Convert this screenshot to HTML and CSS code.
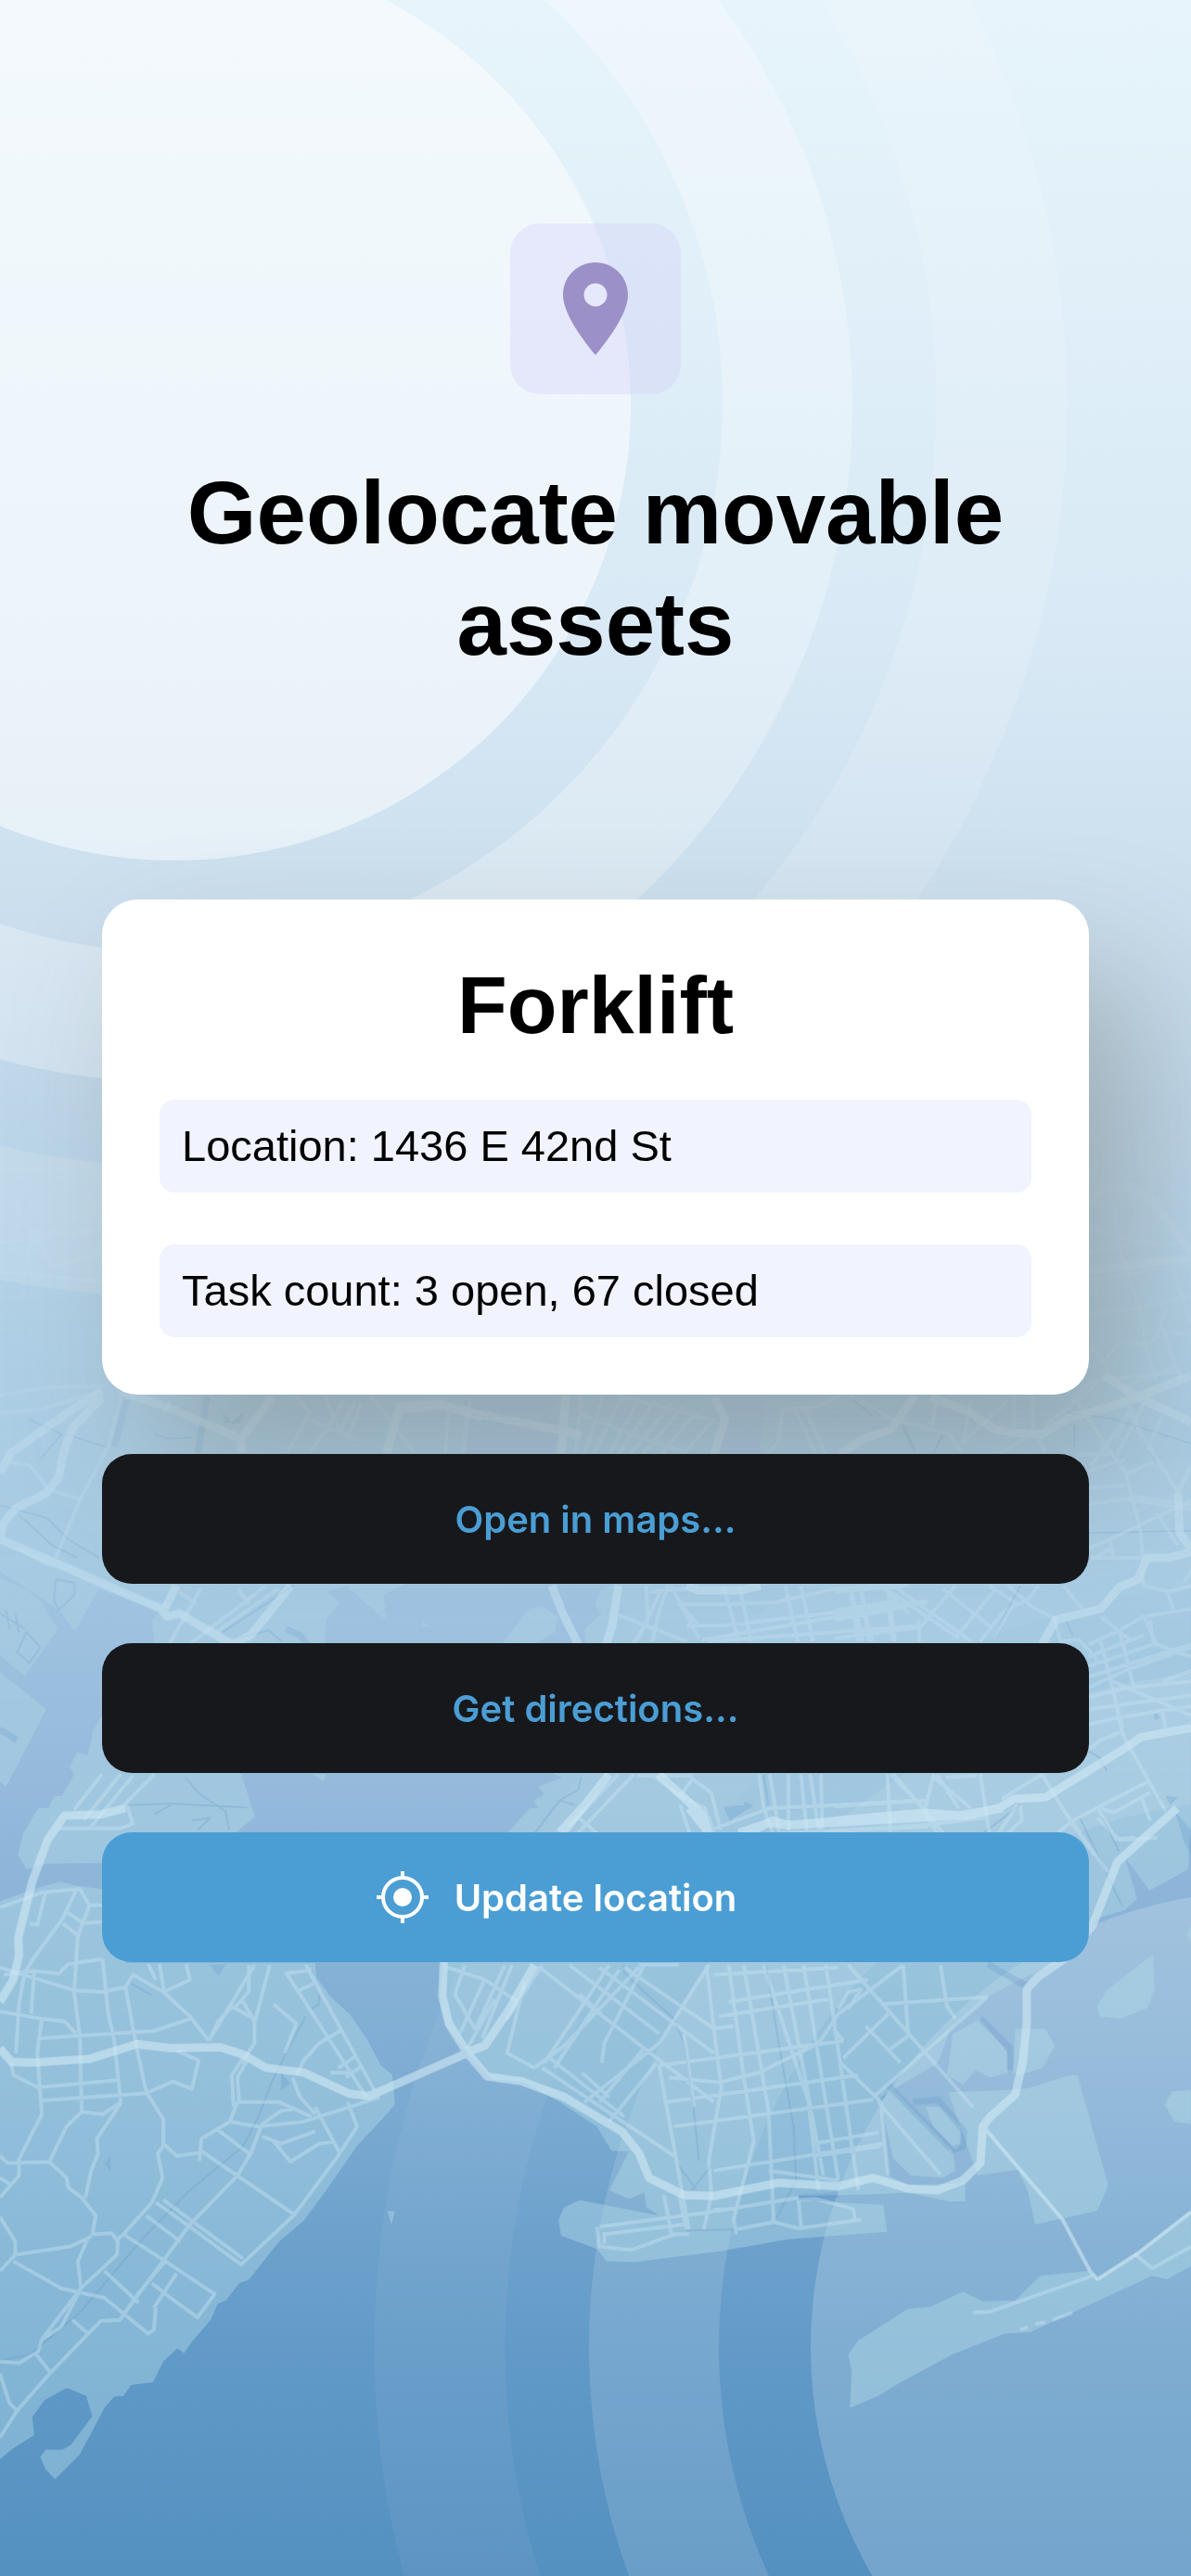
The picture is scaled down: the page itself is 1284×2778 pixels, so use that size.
FILE: index.html
```
<!DOCTYPE html>
<html lang="en">

<head>
    <meta charset="UTF-8">
    <meta name="viewport" content="width=device-width, initial-scale=1">
    <title>Geolocate movable assets</title>
    <link rel="stylesheet" href="styles.css">
</head>

<body>
    <svg class="backdrop" viewBox="0 0 1284 2778" preserveAspectRatio="xMidYMid slice" aria-hidden="true">
        <defs>
            <linearGradient id="sky" x1="0" y1="0" x2="0" y2="1">
                <stop offset="0" stop-color="#e7f4fb" />
                <stop offset="0.25" stop-color="#d8e9f5" />
                <stop offset="0.36" stop-color="#cadeed" />
                <stop offset="0.5" stop-color="#b3d0e7" />
                <stop offset="0.6" stop-color="#a2c5e1" />
                <stop offset="0.7" stop-color="#93b9db" />
                <stop offset="0.8" stop-color="#7fadd3" />
                <stop offset="0.92" stop-color="#6099c7" />
                <stop offset="1" stop-color="#5490c0" />
            </linearGradient>
            <linearGradient id="fade" x1="0" y1="0" x2="0" y2="1">
                <stop offset="0.42" stop-color="#000" />
                <stop offset="0.56" stop-color="#888" />
                <stop offset="0.7" stop-color="#fff" />
            </linearGradient>
            <mask id="mapFade" maskUnits="userSpaceOnUse" x="0" y="0" width="1284" height="2778">
                <rect width="1284" height="2778" fill="url(#fade)" />
            </mask>
        </defs>

        <rect width="1284" height="2778" fill="url(#sky)" />

        <!-- signal rings -->
        <g fill="none" stroke="#fff">
            <circle cx="188" cy="436" r="492" fill="#fff" fill-opacity="0.5" stroke="none" />
            <circle cx="188" cy="436" r="661" stroke-width="140" stroke-opacity="0.28" />
            <circle cx="188" cy="436" r="892" stroke-width="141" stroke-opacity="0.14" />
            <circle cx="1366" cy="2531" r="492" fill="#fff" fill-opacity="0.19" stroke="none" />
            <circle cx="1366" cy="2531" r="661" stroke-width="140" stroke-opacity="0.13" />
            <circle cx="1366" cy="2531" r="892" stroke-width="141" stroke-opacity="0.05" />
        </g>

        <g mask="url(#mapFade)">
            <g class="land">
                <g transform="translate(0 1950) scale(0.40944 0.52806)">
                    <path d="M0 190 110 160 160 150 200 158 270 165 330 316 830 316 833 345 870 385 920 420 965 470 1003 525 1033 545 1040 605 1000 640 940 690 850 790 800 842 735 885 655 963 630 970 595 1005 572 1013 555 1045 505 1090 485 1113 467 1103 430 1130 403 1172 345 1178 325 1200 300 1202 275 1225 210 1320 145 1370 120 1350 106 1325 120 1310 165 1310 187 1300 243 1242 227 1200 176 1184 118 1208 85 1243 90 1280 30 1310 0 1330Z" />
                    <path d="M62 50 47 95 70 125 125 113 270 112 300 0H100ZM1020 822 1040 824 1030 850Z" />
                </g>
                <g transform="translate(442 1950) scale(0.53699 0.52806)">
                    <path d="M65 250V316L60 390 72 445 115 500 165 555 225 558 300 600 375 650 405 700 440 700 400 780 440 798 470 785 475 815 500 832 340 800 310 815 298 840 303 873 375 900 395 925 450 927 620 905 760 880 958 865 950 810 780 800V792L940 788 1000 785 1080 803 1115 803 1115 765 1000 770 960 750 945 590 1060 520 1085 450 1160 385 1235 345 1300 316 1380 225 1435 208 1460 185 1435 100 1485 168 1562 125 1568 0H240L65 200Z" />
                    <path d="M1078 545 1110 565 1135 535 1165 550 1200 540 1200 500 1145 430 1090 460ZM1210 540 1215 450 1275 450 1295 485 1270 530 1225 545ZM945 600 965 570 1090 700 1095 740 1070 755 1005 750 970 715 960 670ZM1035 610 1065 610 1105 650 1107 685 1095 698 1050 650ZM1080 580 1200 575 1240 572 1320 547 1340 545 1402 770 1380 822 1255 850 1240 780 1220 738 1140 750Z" />
                    <path d="M1380 405 1400 370 1492 298 1495 370 1480 408 1425 430 1385 425ZM1568 575 1530 578 1515 605 1535 640 1568 645ZM1568 240 1560 255 1568 275ZM883 1225 887 1150 880 1115 900 1087 1000 1022 1045 1018 1110 987 1150 1007 1215 1005 1265 955 1360 945 1380 960 1470 900 1568 820V935L1520 962 1490 955 1245 1070 1195 1073 1090 1115 980 1175 940 1200Z" />
                </g>
                <g transform="translate(0 1480) scale(0.33333)">
                    <path d="M0-900H1500V250L1300 690 1240 720 1250 800 1215 775 1120 690 1060 710 1100 745 1055 800 1050 878H500L490 800 520 775 320 700 243 837 195 775 120 720 0 645Z" />
                    <path d="M0 665 90 705 130 740 187 830 80 983 0 915ZM0 970 150 1090 20 1340 0 1325ZM1360 800 1395 825 1370 822Z" />
                    <path d="M62 1560 90 1490 150 1420 175 1370 200 1370 240 1300 225 1275 250 1230 285 1238 300 1160 325 1115 780 1300 825 1437 760 1491 600 1560ZM1010 1300H1055L1048 1322Z" />
                </g>
                <g transform="translate(480 1480) scale(0.33333)">
                    <path d="M370 60 340 130 370 160 350 267H860L912 150 875 60ZM1040 60 1015 267H540V687L500 705 485 750 505 780 450 830 455 878 350 1300 380 1310 300 1340 320 1365 285 1385 300 1410 250 1440 210 1500H2412V-900H1040Z" />
                    <path d="M185 878 270 765 310 755 365 790 355 840 290 878Z" />
                </g>
            </g>

            <g class="creek">
                <g transform="translate(0 1950) scale(0.40944 0.52806)">
                    <path d="M0 1128 80 1115 210 1030 380 875 500 780 640 690 680 630 715 560 760 490 805 425M345 358 400 382M820 410 840 400 840 380" />
                    <path class="pond" d="M275 725 290 712 292 742ZM553 320 575 343 595 318ZM740 540 765 562 740 575Z" />
                </g>
                <g transform="translate(442 1950) scale(0.53699 0.52806)">
                    <path d="M430 320V335L470 375 530 430 550 480 570 620 580 720M715 320 740 480 770 650 775 760 735 838M540 730 575 780M605 730 565 780M555 862 650 860M1345 20 1430 200" />
                    <path class="inlet" d="M1145 430 1205 490 1205 535M1010 600 1060 595 1112 660 1110 690 1085 700M960 565 1085 695M1160 318 1235 362M780 795 860 790" />
                </g>
                <g transform="translate(0 1480) scale(0.33333)">
                    <path d="M90 150 200 200 130 280M210 200 340 240M0 430 150 470 220 540 320 600M60 460 170 560 250 600M0 780 80 830M20 770 30 830M50 780 60 840M85 840 130 890 95 940 55 905ZM600 1310 640 1360 730 1420 740 1480M410 1400 550 1395 800 1408M550 1400 500 1430M620 1450 680 1440 640 1480M720 840 950 690M760 860 870 835 910 870M500 200 550 215 620 210M180 670 240 680 240 720 190 770 175 740Z" />
                    <path class="inlet" d="M410 90 370 240M670 80 640 260M0 1155 55 1190M925 830 970 850 1000 890" />
                    <path class="pond" d="M720 130 750 160 790 125 780 165H725Z" />
                </g>
                <g transform="translate(480 1480) scale(0.33333)">
                    <path d="M440 1310 430 1350 370 1385 290 1490M370 1385 420 1400M1030 1300 1045 1400M1320 80 1410 140M1480 170 1520 250" />
                    <path class="pond" d="M900 1405 965 1400 970 1388 997 1402 920 1450Z" />
                </g>
                <g transform="translate(900 1480) scale(0.33333)">
                    <path d="M50 80 120 140M220 180 260 260M350 200 320 260M750 130 900 150 1152 230M775 170V240M820 520 1152 512M750 810 770 850M820 1225 855 1245 880 1290M865 1440 920 1550M600 690 510 860M600 1400 480 1490" />
                    <path class="pond" d="M1070 1370 1110 1375 1085 1400ZM1100 1420 1152 1480V1560L1130 1520ZM1030 1105 1045 1100 1050 1120 1035 1125Z" />
                </g>
            </g>

            <g class="streets">
                <g transform="translate(0 1950) scale(0.40944 0.52806)">
                    <path d="M0 203 110 172 210 165 235 198 270 198M120 172 98 238 78 236M200 168 165 225 90 305 65 335M165 235 210 262M172 210 220 235 268 232M235 200 205 260 195 375 210 465 215 620M10 340 90 332 155 338 180 318 270 308M0 325 40 335 195 372 270 375 330 365 350 340 430 375 500 425 550 475M270 308 285 420 300 470 318 600M330 365 360 490 385 580M65 335 50 400 42 500M90 332 82 420M0 415 110 430 170 435 200 460M110 430 98 500 110 625 48 720M100 470 200 465 405 455 500 430M390 318 410 350M420 318 432 375 500 350 490 318M30 520 35 545 100 570 315 555M110 597 385 582M320 600 270 625 215 620 175 650 130 722 175 755 180 775 215 795 252 832 243 870 295 868 310 885 308 912 213 980M320 600 255 675 258 705 240 740 225 795M385 580 430 635 430 690 415 705 428 755 400 805 325 870 310 880M385 582 455 558 505 573 523 515 465 495M430 685 465 710 530 703M0 710 20 725 130 722M0 755 30 770M0 795 50 750 50 715M0 835 40 885 40 912 0 945M40 912 185 895 240 875M35 925 160 980 205 988 275 1000 390 1073 405 1065 410 1020M213 980 205 925 230 880M213 980 110 1085 100 1110 50 1133 0 1130M110 1085 160 1060 213 980M95 1115 130 1150M190 1045 235 1075M0 1285 45 1230 130 1155 265 1047 315 1045 500 850 625 750 660 705 690 645 740 618 770 615M315 1045 365 990 435 925M45 1230 25 1215 0 1155M275 945 365 1010M325 870 435 925 565 992 520 1040 435 992 400 970M405 1020 465 950M385 832 475 885M410 805 500 855 635 932 775 830 890 710 940 650 915 600M430 800 640 920M530 700 775 830M570 655 655 705M525 720 530 675 605 640 625 600 735 600 820 630M615 610 610 545 640 510M630 600 625 550 650 515M640 395 670 435 670 480 635 520M550 475 575 435 610 405 670 430M550 475 670 320M655 320V375L620 405M710 320 670 440M750 338 820 330M755 338 965 590M805 320 985 575M780 375 825 358M840 480 895 455M890 530 940 505M910 550 955 525M920 540 870 540M780 545 800 515 840 480M720 400 780 440 750 500M605 640 680 650 800 640 1000 590M690 670 740 685 830 660M720 680 765 722 840 685 875 682M830 610 895 705M770 550 790 590 830 625" />
                </g>
                <g transform="translate(442 1950) scale(0.53699 0.52806)">
                    <path d="M75 325 150 350 215 395M110 320 90 380 130 450M150 350 100 460M170 390 115 490M190 320 130 455M205 320 145 470M215 395 195 430 265 320M230 355 195 500 250 530 310 485 460 325M260 325 610 600M320 320 500 460M400 320 270 520M420 330 290 530M265 530 530 710M280 510 430 630M345 540 400 590M495 520 400 640M470 490 380 600M340 380 385 420M380 325 610 500M430 325 610 450M540 320 460 320M600 320 500 480 350 600M385 520 390 480 470 320M595 320 610 450 625 570 600 720 605 790 590 860M640 320 670 550 690 680 650 840 655 870M670 320 720 620 730 845M710 320 800 600 820 780M750 320 830 750M790 320 860 760M835 320 900 780M610 340 860 325M640 395 920 350M620 425 840 390M610 450 650 445M500 525 870 475M520 550 620 560 700 540 820 480 860 420 990 320M515 600 900 545M530 650 930 595M500 525 560 860M550 460 570 610M610 740 950 685M810 685 940 662M815 710 945 690M870 510 960 420M880 410 905 370 880 375 860 410M850 450 870 475M860 515 945 600 960 750M930 590 1160 385M990 320 1000 460M1065 320 1078 405 1095 430M950 400 1160 385M880 320 1130 610M915 445 985 520M960 495 1000 465M940 600 1065 748M375 855 380 895 445 902 530 870 560 870M380 855 600 825 780 795M390 870 550 850M390 865V890M610 820 660 818M655 860 730 845 780 858 905 840M510 790 525 870M540 790 555 860M780 800 785 855M780 800 815 798 890 818 893 838M720 740 860 760M1130 1030 1165 1028 1370 955M1225 1065 1240 1060M1255 1053 1275 1050M1290 1045 1330 1030M1455 910 1490 940 1568 895M1310 0 1400 130M1380 20 1425 65 1500 60" />
                </g>
                <g transform="translate(0 1480) scale(0.33333)">
                    <path d="M0 75 130 50 340 45M0 130 130 120 330 60M30 290 95 300 160 380 260 410 350 240 390 80M260 410 180 600M60 570 170 630M550 90 530 130M960 80 1000 130 930 260M990 150 1160 220M1050 80 1100 190 1150 90M1110 90 1060 180 1000 260M1170 100 1120 215M1200 80 1260 150M1450 130 1440 260M1510 130 1500 260M1280 180 1340 260M650 700 550 875M580 710 635 750M770 700 805 750M860 690 620 875M900 700 700 840M190 1475H390L430 1460 410 1400M330 1300 240 1415M390 1300 270 1450M430 1305 290 1475M500 1300 400 1400" />
                </g>
                <g transform="translate(480 1480) scale(0.33333)">
                    <path d="M80 80 60 265M440 80 420 265M510 80 450 265M570 80 480 265M620 100 530 265M680 90 560 265M730 100 600 265M770 110 640 265M810 130 700 265M870 150 770 265M430 130 600 200 780 260M560 75 850 150M1090 120 1080 220 1040 265M1130 120 1200 265M1160 110 1230 265M1090 120 1190 115 1280 75M560 785 780 870M620 870 700 700M670 870 690 780 720 690M650 690 655 800 610 875M750 750H900L1060 745 1260 700 1500 685M780 820H900L1560 740M830 865 1100 820 1380 770 1560 745M850 870 1540 820M730 690 820 860M760 750 820 820M900 690 950 870M950 690 990 870M1100 690 1140 870M1150 690 1190 870M1310 690 1350 870M1340 690 1380 870M1430 690 1455 870M660 710 780 700M610 1300 430 1490M680 1310 760 1370 840 1410 870 1490M560 1300 400 1470M430 1440 490 1490M760 1370 800 1315 860 1360 890 1480M760 1400 790 1490M1015 1300 1030 1410 1060 1490M1050 1300 1080 1490M1110 1300V1490M1150 1300 1170 1490M1180 1300 1210 1490M1215 1300 1220 1490M1430 1300 1440 1490M1440 1300 1560 1420M860 1480 1050 1410 1560 1385M1080 1490 1200 1485 1560 1470M620 1305H800" />
                </g>
                <g transform="translate(900 1480) scale(0.33333)">
                    <path d="M50 75 180 150 370 200 410 260M330 90 310 190M440 90 415 230 560 90M580 75V180M640 75V180M680 170 760 110 820 30M780 90 900 270 940 320 990 520 995 600M820 30 1100 0M950 120 1030 260 1110 390M960 120 830 300M1000 100 910 270M530 265 620 210M660 215 680 260M780 265 900 265M820 320 940 280M1060 140 1010 250M940 330 1030 290M820 375 940 365M820 425 950 410 1152 445M960 400 1152 430M830 600 1000 600M820 570 890 540 1152 415M890 540 900 595M830 605 890 570M1040 455 1110 560M1152 300 1110 390M0 710 230 690M0 770 200 740M0 800 230 760M0 860 280 825M50 690 75 870M85 690 110 870M150 690 400 860M190 690 440 870M170 740 190 870M270 800 275 870M240 780 160 700M390 690 280 820M350 700 500 820M520 700 390 860M560 690 640 760 720 800M660 690 620 740 550 770 470 870M740 690 800 765M500 690 590 750M580 750 510 860M710 800 730 870 790 865 850 930M860 790 960 870M990 640 1000 690 1080 710 1152 690M1152 640 1130 680M1075 710 1095 765M820 880 910 840 1000 790 1152 765M820 920 1000 850M820 950 1030 880M820 985 1090 900 1152 880M820 1020 950 960 1152 890M920 830 965 1010M860 870 930 1150M890 980 930 1170 1070 1420M1000 790 1040 880 1152 920M820 1050 950 1020 1152 1000M820 1090 1152 1045M820 1140 900 1120 1152 1080M900 1000 1152 1110M1152 965 1060 1000M1060 1100 1070 1150M820 1220 860 1190 920 1165M1020 800 1030 880M670 1300 760 1450 840 1560M770 1450 1010 1325M850 1410 910 1510 970 1505M860 1410 900 1425 1020 1360M990 1370 1020 1450M720 1490 770 1450M170 1300 180 1490M190 1300 350 1490M320 1300 290 1420 330 1490M320 1310 440 1410M330 1300 400 1410M470 1300 500 1490M360 1310 460 1305M0 1405 260 1385M0 1485 290 1465 490 1440M540 1380 670 1300M600 1400 605 1450 560 1490M590 1400 530 1490" />
                </g>
                <g transform="translate(1084 1150) scale(0.33333)">
                    <path d="M270 525 440 570 600 580M270 600 400 580M270 690 600 640M270 800 450 780 600 740M350 440 370 600 430 770 460 930 490 1020M540 650 600 830M520 780 490 870 460 900M490 850 600 870M510 850 550 970 570 1010M320 950 370 890 450 900M280 910 330 970M400 1030 560 965M240 1080 310 1010M400 1120 360 1200M400 1100 440 1200" />
                </g>
                <g transform="translate(0 1300) scale(0.8189 0.5102)">
                    <path d="M0 30 60 60 134 0M0 80 134 50M20 0 70 130 134 100M0 140 134 160M40 50 30 200" />
                </g>
            </g>

            <g class="highways">
                <g transform="translate(0 1950) scale(0.40944 0.52806)">
                    <path d="M330 0 265 13 170 15 125 65 85 150 48 265 50 300 35 350 0 395M0 490 30 518 80 520 235 512 360 482 450 490 580 488 640 503 700 530 800 540 920 583 970 588 1010 575 1230 500" />
                </g>
                <g transform="translate(442 1950) scale(0.53699 0.52806)">
                    <path d="M68 310 65 385 78 440 115 500 155 548 225 558 310 590 425 660 460 705 480 755 550 790 610 792 740 765 860 772 930 755 1000 777 1060 780 1110 760 1145 725 1150 650 1165 630 1215 585 1230 520 1238 440V370L1260 345 1310 310 1370 240 1420 110 1540 0M115 498 150 485 200 410 250 320M345 0 300 50M560 0 600 50M660 50 720 30 760 35 1100 15 1190 0" />
                    <path class="avenue" d="M1155 655 1310 840 1365 945 1380 962 1460 910 1568 825" />
                </g>
                <g transform="translate(0 1480) scale(0.33333)">
                    <path d="M0 325 35 260 220 130 330 60M330 80 235 180 205 260 190 340 150 390 50 440 10 490 0 540 200 625 520 765 540 790 580 780 750 880 810 850 860 790 940 690M570 690 530 770M390 60 560 120 780 215 880 80M780 215 780 260M1250 260 1290 120 1430 105 1560 145M1280 110 1440 100" />
                </g>
                <g transform="translate(480 1480) scale(0.33333)">
                    <path d="M0 110 130 140 390 190 440 205M390 75 375 265M870 80 905 150 870 265M1520 75 1440 185 1340 220 1280 265M345 690 380 780 430 880M560 690 540 820 520 880M780 690 820 705H960L1020 690M530 1300 380 1490M690 1300 830 1430 850 1490M980 1490 1060 1450 1110 1465 1560 1425" />
                </g>
                <g transform="translate(900 1480) scale(0.33333)">
                    <path d="M310 80 430 125 510 180 570 195 670 200 760 145 860 120 980 80 1152 10M870 10 980 80 1152 160M1152 580 1080 600 1010 600 980 670 920 695 860 765 715 800 670 880M1110 390 1115 520 1152 570M1152 1150 990 1180 940 1215 680 1375 580 1380 530 1410 420 1435 290 1425 0 1450" />
                </g>
                <g transform="translate(1084 1150) scale(0.33333)">
                    <path d="M270 430 330 395 400 390 470 430 600 600M270 660 600 620" />
                </g>
            </g>
        </g>
    </svg>

    <main class="screen">
        <div class="badge">
            <svg class="pin" viewBox="0 0 140 200" aria-hidden="true">
                <path fill-rule="evenodd" d="M70 0C31 0 0 31 0 70C0 105 32 154 70 200C108 154 140 105 140 70C140 31 109 0 70 0ZM70 45A25 25 0 1 1 70 95A25 25 0 1 1 70 45Z" />
            </svg>
        </div>
        <h1 class="title">Geolocate movable assets</h1>

        <section class="card">
            <h2 class="asset-name">Forklift</h2>
            <p class="info">Location: 1436 E 42nd St</p>
            <p class="info">Task count: 3 open, 67 closed</p>
        </section>

        <div class="actions">
            <button type="button" class="btn">Open in maps...</button>
            <button type="button" class="btn">Get directions...</button>
            <button type="button" class="btn btn-primary">
                <svg class="target" viewBox="0 0 56 56" aria-hidden="true">
                    <circle cx="28" cy="28" r="21" fill="none" stroke="currentColor" stroke-width="4" />
                    <circle cx="28" cy="28" r="10" fill="currentColor" />
                    <path d="M28 0V6M28 50V56M0 28H6M50 28H56" stroke="currentColor" stroke-width="4" />
                </svg>
                <span>Update location</span>
            </button>
        </div>
    </main>
</body>

</html>
```

FILE: styles.css
```
* {
    box-sizing: border-box;
}

body {
    margin: 0;
    min-height: 100vh;
    font-family: "Liberation Sans", Arial, sans-serif;
    background-color: #a0c4e0;
    color: #000;
}

/* Background map */
.backdrop {
    position: fixed;
    top: 0;
    left: 0;
    width: 100%;
    height: 100%;
    z-index: -1;
}

.backdrop path {
    vector-effect: non-scaling-stroke;
    stroke-linejoin: round;
}

.land {
    fill: #b2dce8;
    opacity: 0.42;
}

.creek {
    fill: none;
    stroke: #5f92c2;
    stroke-width: 2px;
    opacity: 0.25;
}

.creek .inlet {
    stroke-width: 7px;
}

.creek .pond {
    fill: #5f92c2;
    stroke: none;
}

.streets {
    fill: none;
    stroke: #cbe5f3;
    stroke-width: 4px;
    opacity: 0.4;
}

.highways {
    fill: none;
    stroke: #d0e9f4;
    stroke-width: 9px;
    opacity: 0.6;
}

.highways .avenue {
    stroke-width: 4px;
}

/* Content */
.screen {
    display: flex;
    flex-direction: column;
    align-items: center;
    padding: 241px 110px 64px;
}

.badge {
    display: flex;
    align-items: center;
    justify-content: center;
    width: 184px;
    height: 184px;
    border-radius: 32px;
    background-color: rgba(208, 203, 250, 0.33);
}

.pin {
    width: 70px;
    height: 100px;
    fill: #9c90c9;
}

.title {
    margin: 68px 0 237px;
    font-size: 96px;
    line-height: 120px;
    text-align: center;
}

.card {
    display: flex;
    flex-direction: column;
    width: 100%;
    padding: 62px;
    border-radius: 38px;
    background-color: #fff;
    box-shadow: 50px 80px 140px rgba(100, 100, 90, 0.36);
}

.asset-name {
    margin: 0 0 50px;
    font-size: 88px;
    line-height: 104px;
    text-align: center;
}

.info {
    margin: 0;
    padding: 22px 24px;
    border-radius: 16px;
    background-color: #f1f3ff;
    font-size: 47px;
    line-height: 56px;
}

.info + .info {
    margin-top: 56px;
}

.actions {
    display: flex;
    flex-direction: column;
    gap: 64px;
    width: 100%;
    margin-top: 64px;
}

.btn {
    width: 100%;
    height: 140px;
    border: none;
    border-radius: 32px;
    background-color: #17181c;
    color: #4a9ed4;
    font-family: Inter, sans-serif;
    font-size: 40px;
    font-weight: 600;
    cursor: pointer;
}

.btn-primary {
    display: grid;
    grid-template-columns: 1fr auto 1fr;
    align-items: center;
    column-gap: 28px;
    background-color: #4a9ed4;
    color: #fff;
}

.target {
    justify-self: end;
    width: 56px;
    height: 56px;
}
```
